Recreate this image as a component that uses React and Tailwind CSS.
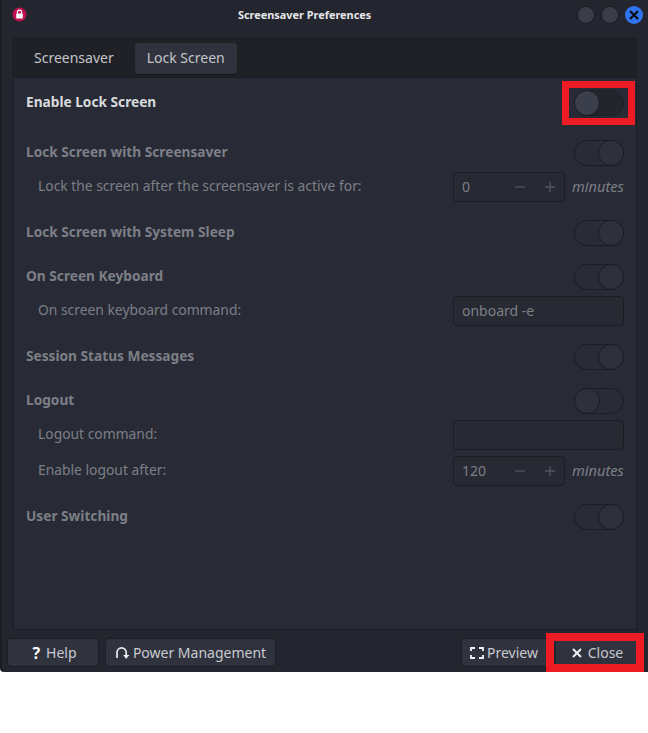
import React from "react";

function Toggle({ on = true, active = false }) {
  return (
    <div className={`relative h-[26px] w-[50px] rounded-full border ${active ? "border-[#1e2027] bg-[#23252d]" : "border-[#1b1d24] bg-[#292c36]"}`}>
      <div
        className={`absolute top-[-1px] h-[26px] w-[26px] rounded-full border border-[#1b1d24] ${on ? "right-[-1px]" : "left-[-1px]"} ${active ? "bg-[#3b3e4b]" : "bg-[#2e313c]"}`}
      />
    </div>
  );
}

function Row({ label, active = false, on = true }) {
  return (
    <div className="flex h-[26px] items-center justify-between">
      <span className={`pb-[1px] text-[13.7px] font-bold ${active ? "text-[#d8dade]" : "text-[#7d7f87]"}`}>{label}</span>
      <Toggle on={on} active={active} />
    </div>
  );
}

function SubLabel({ children }) {
  return <span className="pb-[1px] pl-3 text-[13.85px] text-[#7d7f87]">{children}</span>;
}

function Spin({ value }) {
  return (
    <div className="flex h-[30px] items-center">
      <div className="flex h-[30px] w-[112px] items-center rounded-[4px] border border-[#1b1d24] bg-[#272a33] pl-2 pr-2">
        <span className="flex-1 pb-[1px] text-[14px] text-[#7d7f87]">{value}</span>
        <svg width="12" height="12" viewBox="0 0 12 12" className="mr-[18px]"><path d="M1 6h10" stroke="#50525c" strokeWidth="1.4" /></svg>
        <svg width="12" height="12" viewBox="0 0 12 12"><path d="M1 6h10M6 1v10" stroke="#50525c" strokeWidth="1.4" /></svg>
      </div>
      <span className="ml-[7px] w-[52px] whitespace-nowrap pb-[1px] text-[14.6px] italic text-[#7d7f87]">minutes</span>
    </div>
  );
}

function Field({ value }) {
  return (
    <div className="flex h-[30px] w-[171px] items-center rounded-[4px] border border-[#1b1d24] bg-[#272a33] px-2 pb-[1px] text-[14px] text-[#7d7f87]">
      {value}
    </div>
  );
}

function SubRow({ label, children }) {
  return (
    <div className="flex h-[30px] items-center justify-between">
      <SubLabel>{label}</SubLabel>
      {children}
    </div>
  );
}

function Btn({ className = "", children }) {
  return (
    <button className={`flex h-[29px] items-center justify-center gap-1 rounded-[4px] border border-[#1b1d24] bg-[#30333e] text-[14px] text-[#c8cad0] ${className}`}>
      {children}
    </button>
  );
}

function WinDot() {
  return <div className="h-[18px] w-[18px] rounded-full border border-[#1b1d24] bg-[#3a3d49]" />;
}

export default function App() {
  return (
    <div className="relative min-h-[733px] bg-white font-['Noto_Sans',sans-serif]">
      <div className="relative flex h-[672px] w-[648px] flex-col rounded-bl-[4px] border-l-2 border-[#1b1d24] bg-[#23262e]">
        {/* title bar */}
        <div className="relative flex h-[38px] items-center pl-[236px]">
          <svg width="15" height="15" viewBox="0 0 15 15" className="absolute left-[10px] top-[7px]">
            <circle cx="7.5" cy="7.5" r="7" fill="#b8124f" />
            <rect x="4.2" y="6.6" width="6.6" height="5" rx="0.6" fill="#fff" />
            <path d="M5.4 6.8V5.2a2.1 2.1 0 0 1 4.2 0v1.6" stroke="#fff" strokeWidth="1.1" fill="none" />
          </svg>
          <span className="pb-[8px] text-[10.9px] font-bold text-[#e6e7ea]">Screensaver Preferences</span>
          <div className="absolute right-[5px] top-[6px] flex items-center gap-[6px]">
            <WinDot />
            <WinDot />
            <div className="flex h-[18px] w-[18px] items-center justify-center rounded-full bg-[#2f74f0]">
              <svg width="10" height="10" viewBox="0 0 10 10"><path d="M1 1l8 8M9 1l-8 8" stroke="#0b0d14" strokeWidth="2.2" /></svg>
            </div>
          </div>
        </div>

        {/* notebook */}
        <div className="mx-[11px] flex h-[592px] flex-col border border-[#1b1d24] bg-[#282b35]">
          <div className="flex h-[39px] items-center gap-[6px] border-b border-[#1b1d24] bg-[#1f2127] pl-[7px]">
            <div className="flex h-[31px] items-center px-[13px] pb-[2px] text-[14px] text-[#c3c5ca]">Screensaver</div>
            <div className="ml-[2px] flex h-[31px] w-[102px] items-center justify-center rounded-[4px] bg-[#30333e] pb-[2px] text-[14px] text-[#c3c5ca] shadow-[0_1px_1px_#14151a]">Lock Screen</div>
          </div>
          <div className="flex flex-col gap-[18px] pl-[12px] pr-[12px] pt-[12px]">
            <div className="mb-[6px]">
              <Row label="Enable Lock Screen" active on={false} />
            </div>
            <div className="flex flex-col gap-[6px]">
              <Row label="Lock Screen with Screensaver" />
              <SubRow label="Lock the screen after the screensaver is active for:"><Spin value="0" /></SubRow>
            </div>
            <Row label="Lock Screen with System Sleep" />
            <div className="flex flex-col gap-[6px]">
              <Row label="On Screen Keyboard" />
              <SubRow label="On screen keyboard command:"><Field value="onboard -e" /></SubRow>
            </div>
            <Row label="Session Status Messages" />
            <div className="flex flex-col gap-[6px]">
              <Row label="Logout" on={false} />
              <SubRow label="Logout command:"><Field value="" /></SubRow>
              <SubRow label="Enable logout after:"><Spin value="120" /></SubRow>
            </div>
            <Row label="User Switching" />
          </div>
        </div>

        {/* button bar */}
        <div className="flex justify-between pl-[5px] pr-[10px] pt-[8px]">
          <div className="flex gap-[6px]">
            <Btn className="w-[92px] gap-[6px] pl-[3px]"><span className="text-[16px] font-bold leading-none text-white">?</span> Help</Btn>
            <Btn className="w-[171px]">
              <svg width="14" height="14" viewBox="0 0 14 14" fill="none">
                <path d="M2 12V6.5a4.6 4.6 0 0 1 9.2 0V10" stroke="#eceef1" strokeWidth="1.7" />
                <path d="M8.2 9h6l-3 4z" fill="#eceef1" />
              </svg>
              Power Management
            </Btn>
          </div>
          <div className="flex gap-[8px]">
            <Btn className="w-[86px] gap-[3px] rounded-r-none border-r-0 pr-[1px]">
              <svg width="14" height="12" viewBox="0 0 14 12" fill="none" stroke="#f2f3f5" strokeWidth="1.8">
                <path d="M5 1H1v3M9 1h4v3M5 11H1V8M9 11h4V8" />
              </svg>
              Preview
            </Btn>
            <Btn className="w-[83px] rounded-none border-[#1b2230] bg-[#2b3342] pl-[2px]">
              <svg width="10" height="10" viewBox="0 0 10 10"><path d="M1 1l8 8M9 1l-8 8" stroke="#eceef1" strokeWidth="2" /></svg>
              <span className="ml-[2px]">Close</span>
            </Btn>
          </div>
        </div>

        {/* red annotations */}
        <div className="pointer-events-none absolute left-[560px] top-[81px] h-[44px] w-[73px] border-[7px] border-[#ed1c24]" />
        <div className="pointer-events-none absolute left-[544px] top-[633px] h-[39px] w-[98px] border-[8px] border-[#ed1c24]" />
      </div>
    </div>
  );
}
